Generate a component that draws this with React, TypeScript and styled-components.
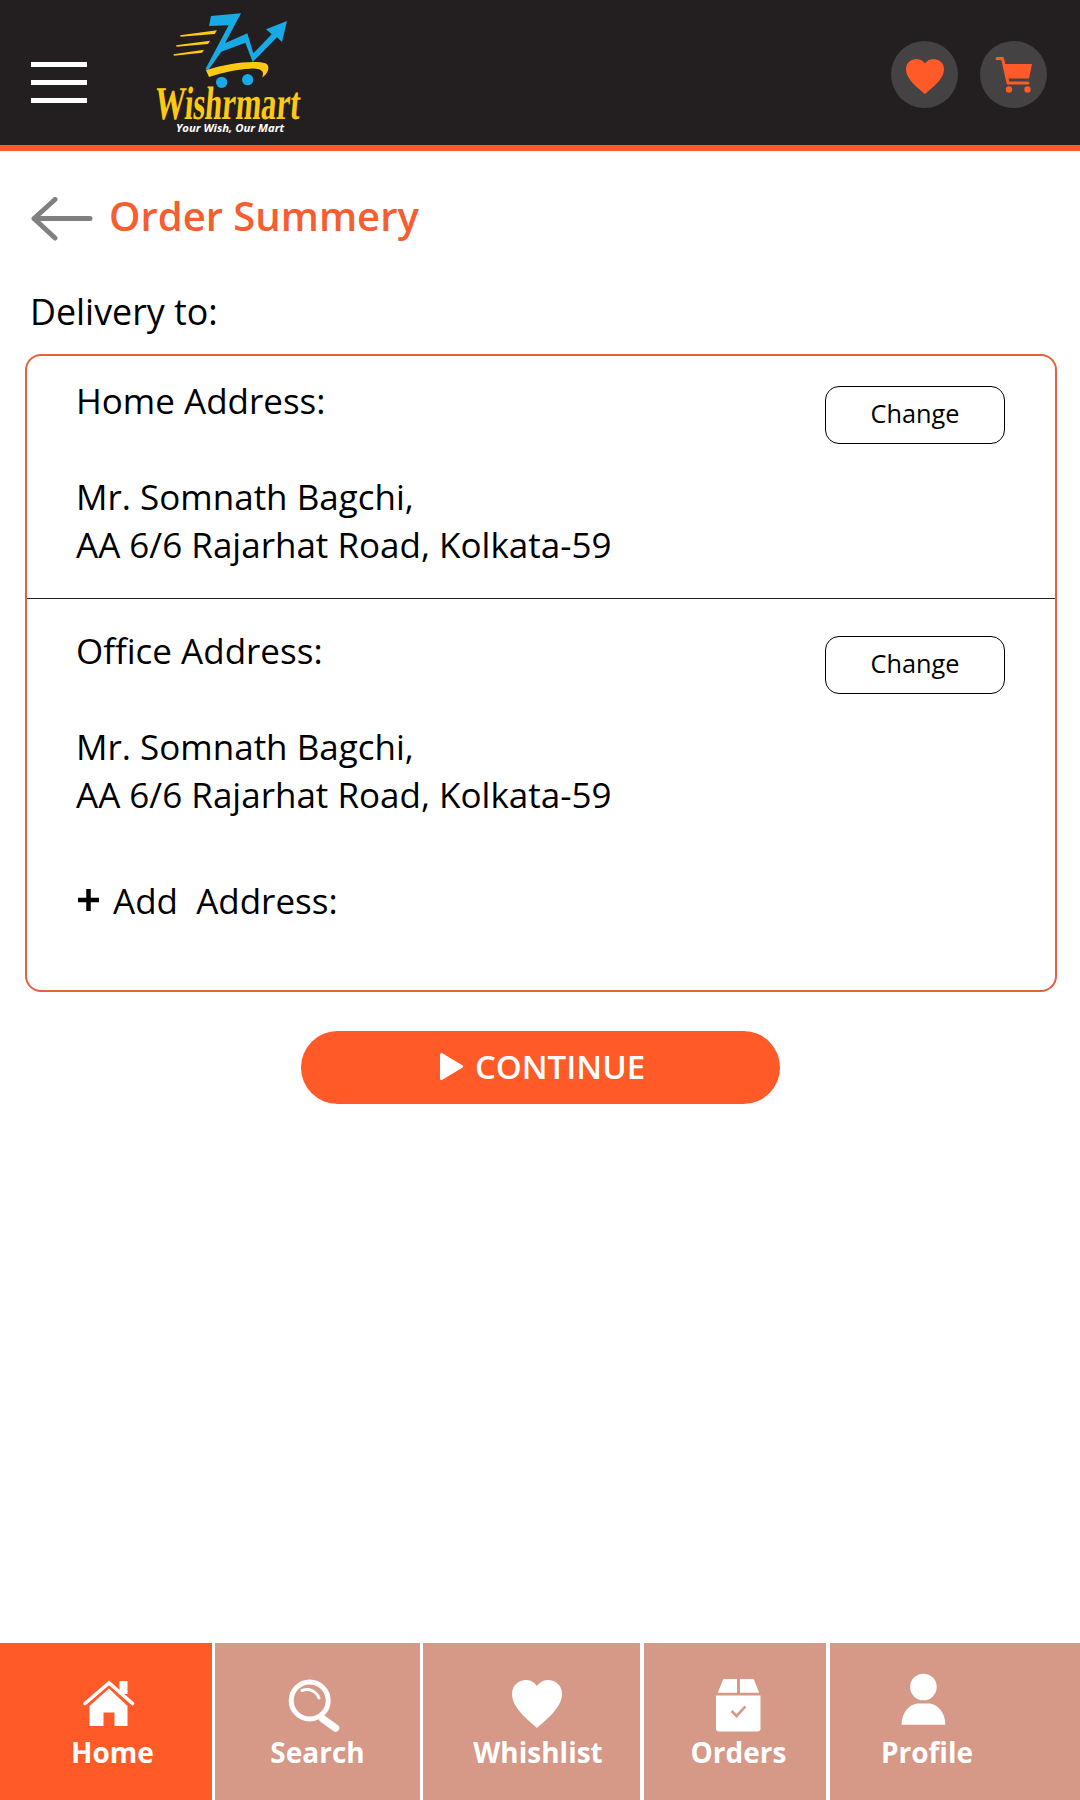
import React from "react";
import styled, { createGlobalStyle } from "styled-components";

const Global = createGlobalStyle`
  html, body { margin: 0; padding: 0; background: #fff; }
  * { box-sizing: border-box; }
  body { font-family: "Open Sans", "Liberation Sans", sans-serif; color: #000; }
`;

const Page = styled.div`
  width: 1080px;
  height: 1800px;
  display: flex;
  flex-direction: column;
  overflow: hidden;
`;

const Header = styled.header`
  height: 151px;
  flex: none;
  background: #231f20;
  border-bottom: 6px solid #ff5a28;
  display: flex;
  align-items: flex-start;
  padding-left: 31px;
  padding-right: 33px;
`;

const Burger = styled.div`
  width: 56px;
  margin-top: 62px;
  display: flex;
  flex-direction: column;
  gap: 13px;
  flex: none;
`;

const BurgerBar = styled.span`
  display: block;
  height: 5px;
  background: #fff;
`;

const Logo = styled.div`
  width: 150px;
  margin-left: 68px;
  margin-top: 12px;
  display: flex;
  flex-direction: column;
  align-items: center;
  flex: none;
`;

const LogoMark = styled.svg`
  width: 120px;
  height: 76px;
  display: block;
`;

const LogoName = styled.span`
  font-family: "Liberation Serif", serif;
  font-weight: 700;
  font-size: 47px;
  line-height: 30px;
  color: #fdc913;
  white-space: nowrap;
  transform: translateX(-2px) skewX(-5deg) scaleX(0.65);
`;

const LogoTag = styled.span`
  font-family: "Open Sans", sans-serif;
  font-weight: 700;
  font-style: italic;
  font-size: 11.3px;
  line-height: 13px;
  margin-top: 3px;
  color: #fff;
  white-space: nowrap;
`;

const HeaderActions = styled.div`
  margin-left: auto;
  margin-top: 41px;
  display: flex;
  gap: 22px;
`;

const RoundAction = styled.div`
  width: 67px;
  height: 67px;
  border-radius: 50%;
  background: #454243;
  display: flex;
  align-items: center;
  justify-content: center;
`;

const HeartGlyph = styled.svg`
  width: 38px;
  height: 35px;
  margin-top: 4px;
`;

const Main = styled.main`
  flex: 1;
  padding: 0 23px 0 25px;
  display: flex;
  flex-direction: column;
`;

const TitleRow = styled.div`
  display: flex;
  align-items: center;
  height: 44px;
  margin-top: 46px;
  padding-left: 6px;
  gap: 16px;
`;

const Title = styled.h1`
  margin: 0 0 6px;
  font-size: 40px;
  line-height: 44px;
  font-weight: 600;
  color: #f65d30;
`;

const DeliveryLabel = styled.div`
  margin-top: 47px;
  padding-left: 5px;
  font-size: 35.8px;
  line-height: 46px;
`;

const Card = styled.section`
  margin-top: 20px;
  height: 638px;
  border: 2px solid #e2623a;
  border-radius: 16px;
`;

const AddressBlock = styled.div<{ $first?: boolean }>`
  padding: ${(p) => (p.$first ? "21px 50px 29px 49px" : "28px 50px 0 49px")};
  border-bottom: ${(p) => (p.$first ? "1px solid #222" : "0")};
  display: flex;
  justify-content: space-between;
  align-items: flex-start;
`;

const AddressText = styled.div`
  font-size: 35px;
  line-height: 48px;
  white-space: nowrap;
`;

const AddressHead = styled.div`
  margin-bottom: 48px;
`;

const ChangeButton = styled.button`
  width: 180px;
  height: 58px;
  margin-top: 9px;
  border: 1px solid #000;
  border-radius: 14px;
  background: #fff;
  font-family: inherit;
  font-size: 25.3px;
  color: #000;
  padding: 0 0 4px;
`;

const AddRow = styled.div`
  margin-top: 58px;
  padding-left: 51px;
  display: flex;
  align-items: center;
  gap: 14px;
  font-size: 35px;
  line-height: 48px;
  white-space: pre;
`;

const PlusGlyph = styled.svg`
  width: 21px;
  height: 22px;
  margin-bottom: 2px;
`;

const ContinueButton = styled.button`
  align-self: center;
  margin-top: 39px;
  margin-left: -2px;
  width: 479px;
  height: 73px;
  border: 0;
  border-radius: 37px;
  background: #ff5a28;
  color: #fff;
  font-family: inherit;
  font-size: 33px;
  font-weight: 600;
  display: flex;
  align-items: center;
  justify-content: center;
  gap: 12px;
  padding: 0 0 2px 5px;
`;

const BottomNav = styled.nav`
  flex: none;
  height: 157px;
  display: flex;
`;

const NavItem = styled.div<{ $w: number; $ml?: number; $active?: boolean; $pl?: number; $pr?: number }>`
  width: ${(p) => p.$w}px;
  margin-left: ${(p) => p.$ml ?? 0}px;
  background: ${(p) => (p.$active ? "#ff5a28" : "#d69887")};
  padding-left: ${(p) => p.$pl ?? 0}px;
  padding-right: ${(p) => p.$pr ?? 0}px;
  padding-top: 30px;
  display: flex;
  flex-direction: column;
  align-items: center;
  color: #fff;
`;

const NavIcon = styled.svg`
  width: 60px;
  height: 60px;
  display: block;
  flex: none;
`;

const NavLabel = styled.span`
  font-size: 28px;
  line-height: 38px;
  font-weight: 700;
`;

const HEART = "M30 53 C24 47 5 34 5 19 C5 10 12 5 19 5 C24 5 28 8 30 11 C32 8 36 5 41 5 C48 5 55 10 55 19 C55 34 36 47 30 53 Z";

export default function App() {
  return (
    <Page>
      <Global />
      <Header>
        <Burger>
          <BurgerBar />
          <BurgerBar />
          <BurgerBar />
        </Burger>
        <Logo>
          <LogoMark viewBox="90 36 360 228">
            <polygon fill="#19a9e5" points="213,48 303,40 255,130 322,100 340,160 395,103 378,88 441,63 426,126 411,112 338,186 316,128 244,155 205,210 196,208 266,76 207,78" />
            <polygon fill="#fdc913" points="120,106 231,91 224,102 122,110" />
            <polygon fill="#fdc913" points="108,136 210,122 204,132 110,140" />
            <polygon fill="#fdc913" points="100,163 192,149 186,158 102,167" />
            <path fill="#fdc913" d="M198 211 C260 190 340 180 376 190 C392 196 386 222 366 232 C376 212 360 204 330 206 C290 208 245 218 207 231 Z" />
            <circle cx="245" cy="247" r="17" fill="#19a9e5" />
            <circle cx="323" cy="239" r="17" fill="#19a9e5" />
          </LogoMark>
          <LogoName>Wishrmart</LogoName>
          <LogoTag>Your Wish, Our Mart</LogoTag>
        </Logo>
        <HeaderActions>
          <RoundAction>
            <HeartGlyph viewBox="5 5 50 48" preserveAspectRatio="none">
              <path fill="#ff5a28" d={HEART} />
            </HeartGlyph>
          </RoundAction>
          <RoundAction>
            <svg width="38" height="38" viewBox="0 0 38 38">
              <path fill="none" stroke="#ff5a28" strokeWidth="3" strokeLinecap="round" strokeLinejoin="round" d="M2 2.5 H7.5 L13 27 H33" />
              <polygon fill="#ff5a28" points="9.5,8 37,8 34,22.5 12.5,22.5" />
              <circle cx="14" cy="33.5" r="3.2" fill="#ff5a28" />
              <circle cx="32.5" cy="33.5" r="3.2" fill="#ff5a28" />
            </svg>
          </RoundAction>
        </HeaderActions>
      </Header>

      <Main>
        <TitleRow>
          <svg width="62" height="44" viewBox="0 0 62 44">
            <path fill="none" stroke="#808080" strokeWidth="5" strokeLinecap="round" strokeLinejoin="round" d="M59 21.5 H3 M24 2.5 L3 21.5 L24 41" />
          </svg>
          <Title>Order Summery</Title>
        </TitleRow>
        <DeliveryLabel>Delivery to:</DeliveryLabel>
        <Card>
          <AddressBlock $first>
            <AddressText>
              <AddressHead>Home Address:</AddressHead>
              Mr. Somnath Bagchi,
              <br />
              AA 6/6 Rajarhat Road, Kolkata-59
            </AddressText>
            <ChangeButton>Change</ChangeButton>
          </AddressBlock>
          <AddressBlock>
            <AddressText>
              <AddressHead>Office Address:</AddressHead>
              Mr. Somnath Bagchi,
              <br />
              AA 6/6 Rajarhat Road, Kolkata-59
            </AddressText>
            <ChangeButton>Change</ChangeButton>
          </AddressBlock>
          <AddRow>
            <PlusGlyph viewBox="0 0 21 22">
              <path fill="none" stroke="#000" strokeWidth="4.5" d="M10.5 0 V22 M0 11 H21" />
            </PlusGlyph>
            <span>Add  Address:</span>
          </AddRow>
        </Card>
        <ContinueButton>
          <svg width="23" height="27" viewBox="0 0 23 27">
            <path fill="#fff" stroke="#fff" strokeWidth="3" strokeLinejoin="round" d="M1.5 1.5 L21.5 13.5 L1.5 25.5 Z" />
          </svg>
          CONTINUE
        </ContinueButton>
      </Main>

      <BottomNav>
        <NavItem $w={212} $active $pl={13}>
          <NavIcon viewBox="0 0 60 60">
            <path fill="#fff" d="M6.5 33 L26 15.5 L44.5 33 V53 H31.5 V39.6 H20.5 V53 H6.5 Z" />
            <path fill="none" stroke="#fff" strokeWidth="3.6" strokeLinecap="round" d="M2 30.5 L26 10 L49.5 30.5" />
            <rect x="36.5" y="8" width="8" height="13" fill="#fff" />
          </NavIcon>
          <NavLabel>Home</NavLabel>
        </NavItem>
        <NavItem $w={205} $ml={3}>
          <NavIcon viewBox="0 0 60 60">
            <circle cx="21.7" cy="27.5" r="18.5" fill="none" stroke="#fff" strokeWidth="5" />
            <path fill="none" stroke="#fff" strokeWidth="7.5" strokeLinecap="round" d="M35 46 L47.5 55" />
            <path fill="none" stroke="#fff" strokeWidth="3" strokeLinecap="round" d="M14 17.5 C21 15 28 18 31 25" />
          </NavIcon>
          <NavLabel>Search</NavLabel>
        </NavItem>
        <NavItem $w={217} $ml={3} $pl={13}>
          <NavIcon viewBox="0 0 60 60">
            <path fill="#fff" transform="translate(-1 2)" d={HEART} />
          </NavIcon>
          <NavLabel>Whishlist</NavLabel>
        </NavItem>
        <NavItem $w={182} $ml={4} $pl={7}>
          <NavIcon viewBox="0 0 60 60">
            <path fill="#fff" d="M15 6 H28 V19.7 H8.8 L13.5 8 Q14 6 15 6 Z M31 6 H44 Q45 6 45.5 8 L50.2 19.7 H31 Z" />
            <path fill="#fff" d="M7 22.4 H51.5 V55.6 Q51.5 58.6 48.5 58.6 H10 Q7 58.6 7 55.6 Z" />
            <path fill="none" stroke="#d69887" strokeWidth="2.6" d="M22.6 38 L27.6 43 L36.4 33.4" />
          </NavIcon>
          <NavLabel>Orders</NavLabel>
        </NavItem>
        <NavItem $w={250} $ml={4} $pr={56}>
          <NavIcon viewBox="0 0 60 60">
            <circle cx="26.4" cy="14" r="13.3" fill="#fff" />
            <path fill="#fff" d="M4.6 51.7 C4.6 40 12 30.4 22 30.4 H31 C41 30.4 48.3 40 48.3 51.7 Z" />
          </NavIcon>
          <NavLabel>Profile</NavLabel>
        </NavItem>
      </BottomNav>
    </Page>
  );
}
